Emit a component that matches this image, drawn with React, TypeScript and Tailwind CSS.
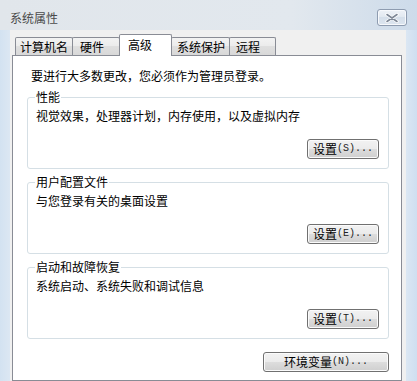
import React from 'react';

const tabs = [
  { label: '计算机名', w: 'w-[58px]', pl: 'pl-[4px]' },
  { label: '硬件', w: 'w-[48px]', pl: 'pl-[7px]' },
  { label: '高级', w: 'w-[53px]', pl: 'pl-[8px]', active: true },
  { label: '系统保护', w: 'w-[59px]', pl: 'pl-[5px]' },
  { label: '远程', w: 'w-[47px]', pl: 'pl-[6px]' },
];

const WinButton = ({ label, hotkey, className }: { label: string; hotkey: string; className: string }) => (
  <button
    type="button"
    className={`flex h-[20px] items-center justify-center rounded-[3px] border border-[#707070] bg-[linear-gradient(to_bottom,#f2f2f2_0%,#ebebeb_50%,#dddddd_50%,#cfcfcf_100%)] text-[12px] leading-none text-black shadow-[inset_0_0_0_1px_#fbfbfb] ${className}`}
  >
    <span>{label}</span>
    <span className="font-['Liberation_Mono',monospace] text-[10px] text-[#222]">({hotkey})...</span>
  </button>
);

const Group = ({ title, text, hotkey, className }: { title: string; text: string; hotkey: string; className: string }) => (
  <fieldset className={`rounded-[3px] border border-[#d5dfe5] pl-[8px] pr-[9px] pb-[9px] ${className}`}>
    <legend className="-ml-[1px] px-[1px] leading-[16px]">{title}</legend>
    <p className="mt-[3px] leading-[16px]">{text}</p>
    <div className="mt-[15px] flex justify-end">
      <WinButton label="设置" hotkey={hotkey} className="w-[72px]" />
    </div>
  </fieldset>
);

export default function App() {
  return (
    <div className="flex h-[381px] w-[417px] flex-col overflow-hidden bg-[linear-gradient(to_right,#d3e2f1,#dce7f3_10px,#dce7f3_405px,#cfdff0)] font-['Noto_Sans_CJK_SC','Noto_Sans',sans-serif] text-[12px] text-black">
      {/* title bar */}
      <div className="flex h-[30px] shrink-0 items-start justify-between bg-[linear-gradient(to_right,#e1e6eb,#e2e8ee_70%,#cddbea)]">
        <span className="ml-[10px] mt-[9px] leading-[17px] text-[#4a4a4a]">系统属性</span>
        <button
          type="button"
          className="mr-[10px] mt-[9px] flex h-[17px] w-[30px] items-center justify-center rounded-[3px] border border-[#8e9cb0] bg-[linear-gradient(to_bottom,#eef2f7,#e1e8f0_50%,#d5dfea_50%,#dce5ef)] shadow-[inset_0_0_0_1px_#f7f9fc]"
        >
          <svg width="14" height="10" viewBox="0 0 14 10">
            <path d="M2 1.5 L12 8.5 M12 1.5 L2 8.5" stroke="#ffffff" strokeWidth="3.2" strokeLinecap="round" />
            <path d="M2 1.5 L12 8.5 M12 1.5 L2 8.5" stroke="#7d8796" strokeWidth="1.6" strokeLinecap="round" />
          </svg>
        </button>
      </div>

      {/* body */}
      <div className="ml-[10px] mr-[11px] flex flex-1 flex-col bg-[#f0f0f0] pt-[4px]">
        <div className="relative z-10 flex items-end pl-[5px]">
          {tabs.map((t, i) =>
            t.active ? (
              <div
                key={t.label}
                className={`-mb-px -ml-px h-[22px] ${t.w} ${t.pl} relative z-10 rounded-t-[2px] border border-b-0 border-[#898c95] bg-white pt-[2px] leading-[16px]`}
              >
                {t.label}
              </div>
            ) : (
              <div
                key={t.label}
                className={`h-[18px] ${t.w} ${t.pl} ${i === 0 ? '' : '-ml-px'} rounded-t-[2px] border border-b-0 border-[#898c95] bg-[linear-gradient(to_bottom,#f3f3f3,#ebebeb_50%,#dfdfdf_50%,#d8d8d8)] pt-[1px] leading-[16px]`}
              >
                {t.label}
              </div>
            )
          )}
        </div>

        <div className="ml-[2px] mr-[4px] flex-1 border border-[#898c95] bg-white pl-[14px] pr-[12px] pt-[12px]">
          <p className="pl-[4px] leading-[16px]">要进行大多数更改，您必须作为管理员登录。</p>

          <Group className="mt-[5px]" title="性能" text="视觉效果，处理器计划，内存使用，以及虚拟内存" hotkey="S" />
          <Group className="mt-[5px]" title="用户配置文件" text="与您登录有关的桌面设置" hotkey="E" />
          <Group className="mt-[5px]" title="启动和故障恢复" text="系统启动、系统失败和调试信息" hotkey="T" />

          <div className="mt-[13px] flex justify-end">
            <WinButton label="环境变量" hotkey="N" className="w-[126px]" />
          </div>
        </div>
      </div>
    </div>
  );
}
